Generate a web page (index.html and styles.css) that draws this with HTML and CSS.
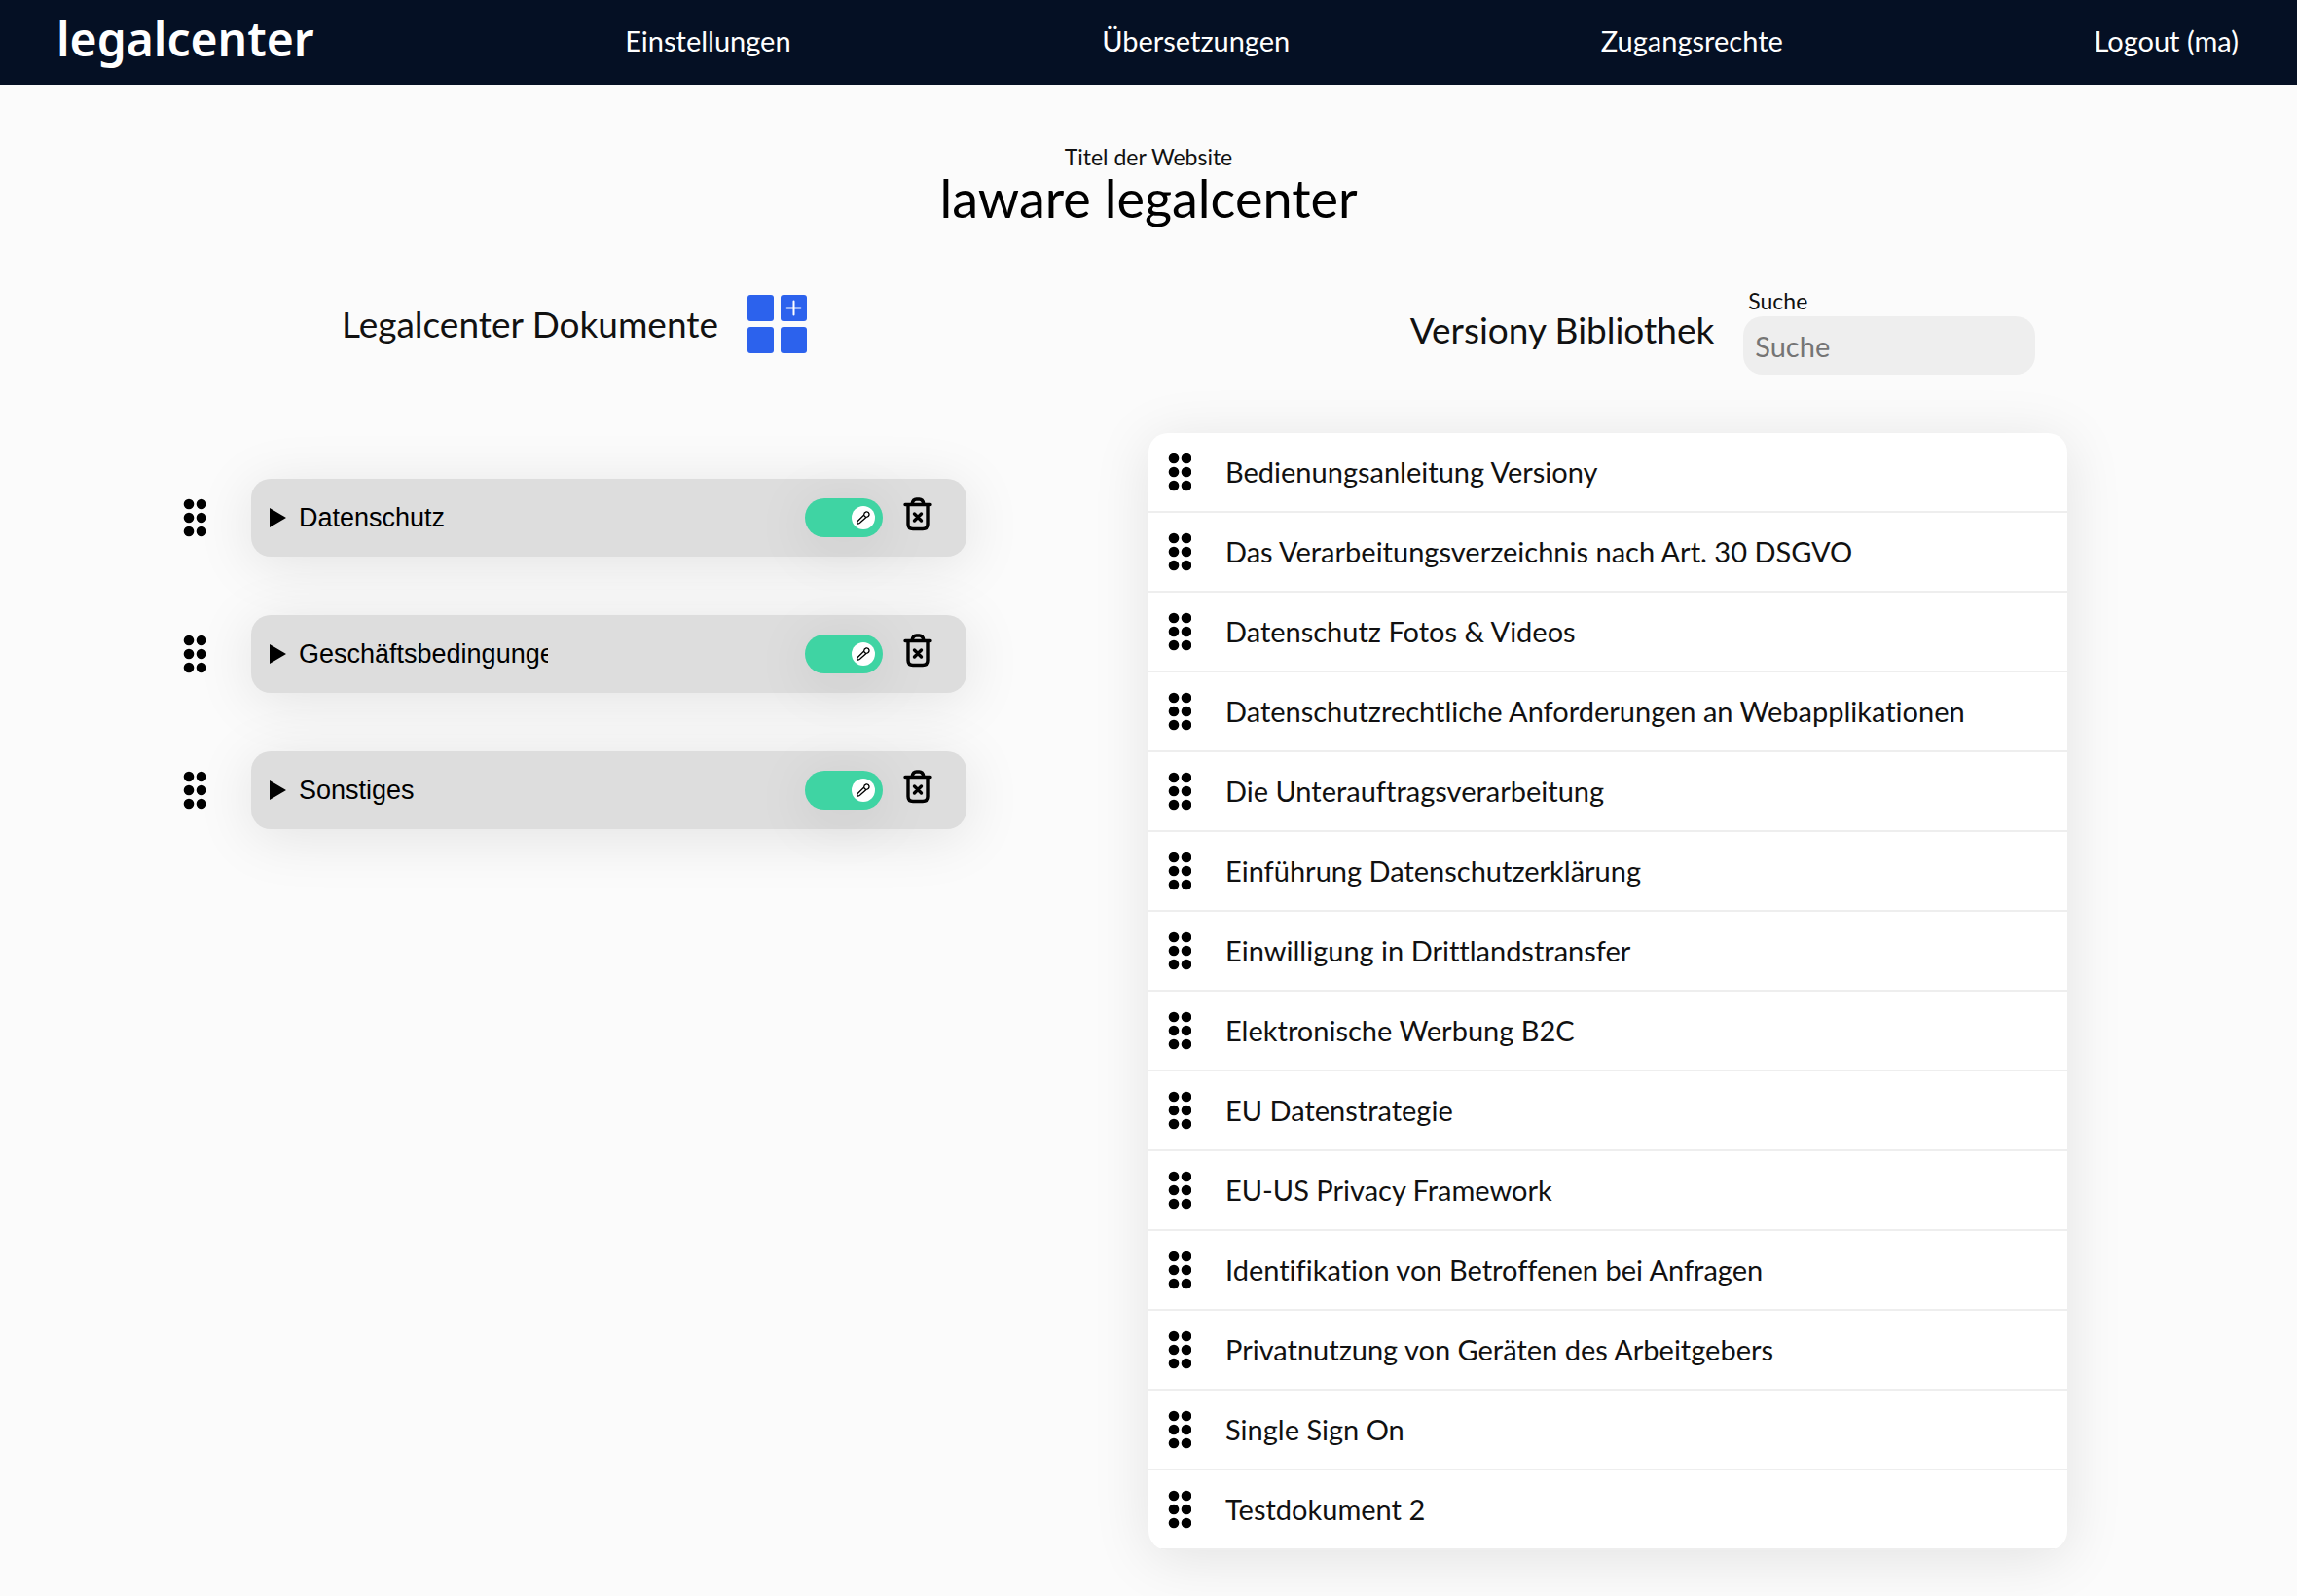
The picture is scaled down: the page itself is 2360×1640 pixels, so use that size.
FILE: index.html
```html
<!DOCTYPE html>
<html lang="de">
<head>
<meta charset="utf-8">
<meta name="viewport" content="width=device-width, initial-scale=1">
<title>laware legalcenter</title>
<link rel="stylesheet" href="styles.css">
</head>
<body>
<svg class="sprite" aria-hidden="true">
  <symbol id="grip" viewBox="0 0 24 40">
    <circle cx="6" cy="6" r="5.3"/><circle cx="19" cy="6" r="5.3"/>
    <circle cx="6" cy="20" r="5.3"/><circle cx="19" cy="20" r="5.3"/>
    <circle cx="6" cy="34" r="5.3"/><circle cx="19" cy="34" r="5.3"/>
  </symbol>
  <symbol id="trash" viewBox="0 0 30 36">
    <g fill="none" stroke="#000" stroke-width="3.4" stroke-linecap="round" stroke-linejoin="round">
      <path d="M2 8.500H28M5 9V28.500Q5 33.500 10 33.500H20Q25 33.500 25 28.500V9M9 8Q10 3 13.500 3H16.500Q20 3 21 8M11.500 18L18.500 25M18.500 18L11.500 25"/>
    </g>
  </symbol>
  <symbol id="pen" viewBox="0 0 14 14">
    <path d="M7.500 4.300L1.200 10.500Q0 12.800 1.200 13Q2.800 13.200 4 11.800L10 6.500Q13.300 5.500 13 3Q12.500 .5 10 .9Q7.800 1.500 7.500 4.300L9.800 6.700" fill="none" stroke="#000" stroke-width="1.300" stroke-linejoin="round"/>
  </symbol>
</svg>

<header class="topbar">
  <a class="logo" href="#">legalcenter</a>
  <nav class="nav">
    <a href="#">Einstellungen</a>
    <a href="#">Übersetzungen</a>
    <a href="#">Zugangsrechte</a>
    <a href="#">Logout (ma)</a>
  </nav>
</header>

<main>
  <div class="site-title">
    <label for="title">Titel der Website</label>
    <input id="title" type="text" value="laware legalcenter">
  </div>

  <div class="columns">
    <section class="column">
      <div class="column-head compact">
        <h2>Legalcenter Dokumente</h2>
        <button class="add" type="button" aria-label="Kategorie hinzufügen">
          <svg viewBox="0 0 61 60">
            <g fill="#2c62ed"><rect width="27" height="27" rx="3"/><rect x="34" width="27" height="27" rx="3"/><rect y="33" width="27" height="27" rx="3"/><rect x="34" y="33" width="27" height="27" rx="3"/></g>
            <path d="M47.500 6.500V20.500M40.500 13.500H54.500" stroke="#fff" stroke-width="2" stroke-linecap="round"/>
          </svg>
        </button>
      </div>
      <ul class="categories">
        <li>
          <svg class="grip"><use href="#grip"/></svg>
          <div class="card">
            <span class="marker"></span>
            <input class="name" type="text" value="Datenschutz" aria-label="Kategorie">
            <label class="toggle"><input type="checkbox" checked aria-label="Bearbeiten"><span class="knob"><svg><use href="#pen"/></svg></span></label>
            <button class="delete" type="button" aria-label="Löschen"><svg><use href="#trash"/></svg></button>
          </div>
        </li>
        <li>
          <svg class="grip"><use href="#grip"/></svg>
          <div class="card">
            <span class="marker"></span>
            <input class="name" type="text" value="Geschäftsbedingungen" aria-label="Kategorie">
            <label class="toggle"><input type="checkbox" checked aria-label="Bearbeiten"><span class="knob"><svg><use href="#pen"/></svg></span></label>
            <button class="delete" type="button" aria-label="Löschen"><svg><use href="#trash"/></svg></button>
          </div>
        </li>
        <li>
          <svg class="grip"><use href="#grip"/></svg>
          <div class="card">
            <span class="marker"></span>
            <input class="name" type="text" value="Sonstiges" aria-label="Kategorie">
            <label class="toggle"><input type="checkbox" checked aria-label="Bearbeiten"><span class="knob"><svg><use href="#pen"/></svg></span></label>
            <button class="delete" type="button" aria-label="Löschen"><svg><use href="#trash"/></svg></button>
          </div>
        </li>
      </ul>
    </section>

    <section class="column">
      <div class="column-head">
        <h2>Versiony Bibliothek</h2>
        <div class="search">
          <label for="search">Suche</label>
          <input id="search" type="text" placeholder="Suche">
        </div>
      </div>
      <ul class="library">
        <li><svg class="grip"><use href="#grip"/></svg>Bedienungsanleitung Versiony</li>
        <li><svg class="grip"><use href="#grip"/></svg>Das Verarbeitungsverzeichnis nach Art. 30 DSGVO</li>
        <li><svg class="grip"><use href="#grip"/></svg>Datenschutz Fotos &amp; Videos</li>
        <li><svg class="grip"><use href="#grip"/></svg>Datenschutzrechtliche Anforderungen an Webapplikationen</li>
        <li><svg class="grip"><use href="#grip"/></svg>Die Unterauftragsverarbeitung</li>
        <li><svg class="grip"><use href="#grip"/></svg>Einführung Datenschutzerklärung</li>
        <li><svg class="grip"><use href="#grip"/></svg>Einwilligung in Drittlandstransfer</li>
        <li><svg class="grip"><use href="#grip"/></svg>Elektronische Werbung B2C</li>
        <li><svg class="grip"><use href="#grip"/></svg>EU Datenstrategie</li>
        <li><svg class="grip"><use href="#grip"/></svg>EU-US Privacy Framework</li>
        <li><svg class="grip"><use href="#grip"/></svg>Identifikation von Betroffenen bei Anfragen</li>
        <li><svg class="grip"><use href="#grip"/></svg>Privatnutzung von Geräten des Arbeitgebers</li>
        <li><svg class="grip"><use href="#grip"/></svg>Single Sign On</li>
        <li><svg class="grip"><use href="#grip"/></svg>Testdokument 2</li>
      </ul>
    </section>
  </div>
</main>
</body>
</html>
```
FILE: styles.css
```css
* { box-sizing: border-box; }

body {
  margin: 0;
  background: #fbfbfb;
  color: #111;
  font: 29px/40px Lato, "Liberation Sans", sans-serif;
  font-variant-ligatures: none;
}

h2, ul { margin: 0; padding: 0; font-weight: 400; }
ul { list-style: none; }
input, button { border: 0; padding: 0; background: none; font: inherit; color: inherit; }
button { cursor: pointer; }
svg { display: block; }
.sprite { display: none; }

.topbar {
  display: flex;
  justify-content: space-between;
  align-items: center;
  height: 87px;
  padding: 0 60px 4px;
  background: #051024;
  color: #fff;
}
.topbar a { color: inherit; text-decoration: none; }
.nav { display: contents; }
.topbar .logo {
  font: 600 48px/60px "Noto Sans", sans-serif;
  padding-bottom: 4px;
  margin-left: -2px;
}

.site-title {
  display: flex;
  flex-direction: column;
  align-items: center;
  padding-top: 62px;
}
.site-title label { font-size: 23px; line-height: 24px; }
.site-title input {
  width: 100%;
  height: 60px;
  font-size: 54px;
  text-align: center;
  color: #000;
}

.columns {
  display: grid;
  grid-template-columns: 1fr 1fr;
  padding: 60px 0 48px;
}
.column-head {
  display: flex;
  justify-content: center;
  align-items: center;
  gap: 30px;
  height: 92px;
}
.compact { height: 80px; }
.column-head h2 { font-size: 37px; }
.add { width: 61px; height: 60px; }
.search { display: flex; flex-direction: column; }
.search label { font-size: 23px; line-height: 32px; padding-left: 5px; }
.search input {
  width: 300px;
  height: 60px;
  padding: 0 12px;
  border-radius: 20px;
  background: #eee;
}
.search input::placeholder { color: #757575; opacity: 1; }

.grip { width: 24px; height: 40px; flex: none; }

.categories {
  display: flex;
  flex-direction: column;
  gap: 60px;
  margin: 119px 187px 0 188px;
}
.categories li { display: flex; align-items: center; gap: 46px; }
.card {
  flex: 1;
  display: flex;
  align-items: center;
  height: 80px;
  padding: 0 35px 0 19px;
  border-radius: 20px;
  background: #ddd;
  box-shadow: 0 8px 60px rgba(0, 0, 0, .1);
}
.marker {
  border-left: 17px solid #000;
  border-top: 10px solid transparent;
  border-bottom: 10px solid transparent;
  margin-right: 13px;
}
.name {
  width: 256px;
  font: 27px/40px "Liberation Sans", Arial, sans-serif;
  color: #000;
}
.toggle {
  display: flex;
  align-items: center;
  justify-content: flex-end;
  width: 80px;
  height: 40px;
  padding-right: 8px;
  margin-left: auto;
  border-radius: 20px;
  background: #3fd4a3;
  box-shadow: 0 8px 60px rgba(0, 0, 0, .1);
}
.toggle input { appearance: none; margin: 0; }
.knob {
  display: grid;
  place-items: center;
  width: 24px;
  height: 24px;
  border-radius: 50%;
  background: #fff;
}
.knob svg { width: 14px; height: 14px; }
.delete { margin: 0 0 8px 21px; }
.delete svg { width: 30px; height: 36px; }

.library {
  width: 80%;
  margin-top: 60px;
  border-radius: 20px;
  overflow: hidden;
  background: #fff;
  box-shadow: 0 8px 60px rgba(0, 0, 0, .1);
}
.library li {
  display: flex;
  align-items: center;
  gap: 35px;
  height: 82px;
  padding: 0 20px;
  border-bottom: 2px solid #eee;
}
```
